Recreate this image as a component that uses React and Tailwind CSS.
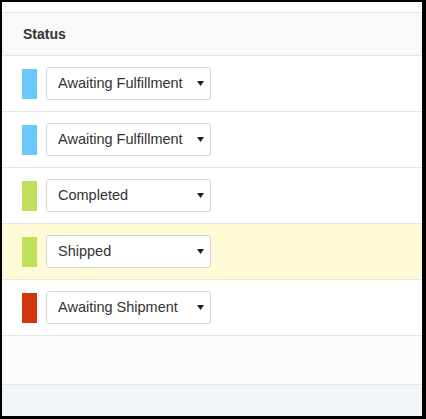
const rows = [
  { color: "bg-[#6ac8f9]", status: "Awaiting Fulfillment" },
  { color: "bg-[#6ac8f9]", status: "Awaiting Fulfillment" },
  { color: "bg-[#bfe058]", status: "Completed" },
  { color: "bg-[#bfe058]", status: "Shipped", highlight: true },
  { color: "bg-[#d2360d]", status: "Awaiting Shipment" },
];

function StatusSelect({ value }) {
  return (
    <div className="flex items-center justify-between w-[165px] h-[33px] pl-[11px] pr-[6px] bg-white border border-[#d5d5d5] rounded-[3px] text-[14.5px] text-[#333]">
      <span>{value}</span>
      <svg width="7" height="5" viewBox="0 0 7 5">
        <path d="M0 0H7L3.5 5Z" fill="#222" />
      </svg>
    </div>
  );
}

export default function App() {
  return (
    <div
      className="w-[426px] h-[419px] bg-black pt-[2px] pl-[2px] pr-[4px] pb-[3px]"
      style={{ fontFamily: '"Liberation Sans", Arial, sans-serif' }}
    >
      <div className="flex flex-col h-full bg-white">
        <div className="h-[11px] border-b border-[#e6e6e6] shrink-0" />
        <div className="flex items-center h-[43px] shrink-0 pl-[21px] bg-[#f9f9f9] border-b border-[#e6e6e6] text-[14px] font-bold text-[#333]">
          Status
        </div>
        {rows.map((row, i) => (
          <div
            key={i}
            className={
              "flex items-center gap-[9px] h-[56px] shrink-0 pl-[20px] border-b border-[#e6e6e6] " +
              (row.highlight ? "bg-[#fffbd7]" : "bg-white")
            }
          >
            <div className={"w-[15px] h-[30px] " + row.color} />
            <StatusSelect value={row.status} />
          </div>
        ))}
        <div className="h-[49px] shrink-0 bg-[#fafbfc] border-b border-[#e6e6e6]" />
        <div className="flex-1 bg-[#f3f6f9]" />
      </div>
    </div>
  );
}
